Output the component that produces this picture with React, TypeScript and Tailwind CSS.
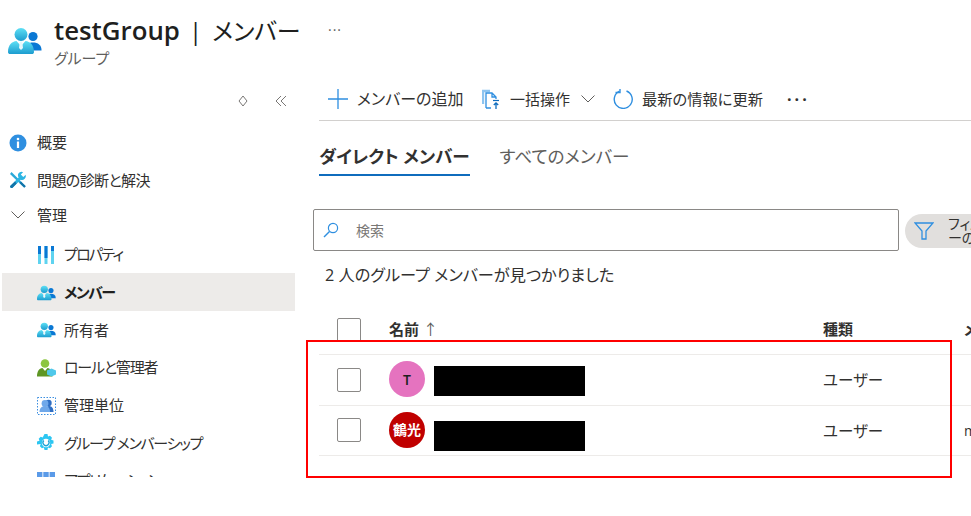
import React from 'react';

const FONT = "font-['Open_Sans','Noto_Sans_CJK_JP',sans-serif] [font-feature-settings:'palt']";

// two-person group icon, used at a few sizes
const GroupIcon = ({ className }: { className: string }) => (
  <svg viewBox="0 0 34 28" className={className}>
    <defs>
      <linearGradient id="grp" x1="0" y1="0" x2="0" y2="1">
        <stop offset="0" stopColor="#5ee0f5" />
        <stop offset="1" stopColor="#1c9ccf" />
      </linearGradient>
    </defs>
    <circle cx="25" cy="9.5" r="4.6" fill="#0a78d4" />
    <path d="M17 23c0-5 3-7.5 8-7.5s8.500 2.500 8.500 7.500v0.500H17z" fill="#0a78d4" />
    <circle cx="13" cy="7.500" r="6.500" fill="url(#grp)" />
    <path d="M0 25c0-7 4-10.500 8.500-11L13 19l4.500-5c4.500 0.500 8.500 4 8.500 11 0 1.500-1 2-2 2H2c-1 0-2-0.500-2-2z" fill="url(#grp)" />
    <path d="M11.800 14.500h2.400L15 21l-2 2-2-2z" fill="#e8f8fc" />
  </svg>
);

const InfoIcon = () => (
  <svg viewBox="0 0 18 18" className="w-[18px] h-[18px]">
    <circle cx="9" cy="9" r="8.500" fill="#2f8fe0" />
    <circle cx="9" cy="5" r="1.300" fill="#fff" />
    <rect x="7.900" y="7.500" width="2.200" height="6.500" fill="#fff" />
  </svg>
);

// crossed wrench and screwdriver
const ToolsIcon = () => (
  <svg viewBox="0 0 18 18" className="w-[18px] h-[18px]">
    <path d="M2.500 1 12 10.500 16.500 15 15 16.500 1 3z" fill="#2aa8d8" />
    <path d="M12 10.500 16.800 15.300 15.300 16.800 10.500 12z" fill="#1273a8" />
    <path d="M10.800 1.200a4 4 0 0 1 3.300 0L11.800 3.500l2.500 2.500L16.700 3.700a4 4 0 0 1-5 5L3.800 16.500c-.8.800-1.500.8-2.200.1s-.7-1.500.1-2.200L9.600 6.500a4 4 0 0 1 1.200-5.300z" fill="#2cb5e3" />
    <path d="M3.800 16.500c-.8.800-1.500.8-2.200.1s-.7-1.500.1-2.200L6 10.500 7.700 12.500z" fill="#1273a8" />
  </svg>
);

const PropsIcon = () => (
  <svg viewBox="0 0 18 18" className="w-[18px] h-[18px]">
    <rect x="1" y="0" width="3" height="18" fill="#5ed3f0" />
    <rect x="7.500" y="0" width="3" height="18" fill="#5ed3f0" />
    <rect x="14" y="0" width="3" height="18" fill="#5ed3f0" />
    <rect x="1" y="0" width="3" height="8" fill="#0a78d4" />
    <rect x="7.500" y="0" width="3" height="12" fill="#0a78d4" />
    <rect x="14" y="0" width="3" height="5" fill="#0a78d4" />
  </svg>
);

const RoleIcon = () => (
  <svg viewBox="0 0 20 18" className="w-[20px] h-[18px]">
    <circle cx="8" cy="4.500" r="4.300" fill="#8cc63f" />
    <path d="M0 17.500c0-5 2-8 5.500-8.500L8 12l2.500-3c3 .5 5 3 5 8.500z" fill="#5e9624" />
    <path d="M14.500 9.500l4.500 2v4l-4.500 2-4.500-2v-4z" fill="#50c8ea" />
  </svg>
);

const AdminUnitIcon = () => (
  <svg viewBox="0 0 19 18" className="w-[19px] h-[18px]">
    <rect x=".500" y=".500" width="18" height="17" fill="#fff" stroke="#3b8ee0" strokeDasharray="1.500 1.500" />
    <circle cx="11.500" cy="6" r="3.200" fill="#2f6fc4" />
    <path d="M8 15c0-4 1.500-6 4-6s4.500 2 4.500 6z" fill="#2f6fc4" />
    <circle cx="8" cy="6.500" r="3.400" fill="#6fa8ea" />
    <path d="M2.500 15c0-4 2.500-6 5.500-6s5 2 5 6z" fill="#6fa8ea" />
  </svg>
);

const GearIcon = () => (
  <svg viewBox="0 0 18 18" className="w-[18px] h-[18px]">
    <path
      d="M7.500 0h3l.5 2.500 2-.8 2 2-.9 2 2.400.8v3l-2.400.6.900 2.200-2 2-2.100-.9-.4 2.600h-3l-.6-2.600-2 .9-2-2 .8-2.200L0 10.500v-3l2.500-.7-.8-2.100 2-2 2 .8z"
      fill="#2cc6f2"
    />
    <circle cx="9" cy="9" r="4.200" fill="#fff" />
    <path d="M6.800 6.500a3 3 0 1 0 4.400 0" fill="none" stroke="#1ea5d8" strokeWidth="1.300" />
  </svg>
);

const AppsIcon = () => (
  <svg viewBox="0 0 18 18" className="w-[18px] h-[18px]">
    {[0, 6.300, 12.600].map((x) => (
      <rect key={x} x={x} y="0" width="5.400" height="5.400" fill="#5a9ae8" />
    ))}
    {[0, 6.300, 12.600].map((x) => (
      <rect key={x} x={x} y="6.300" width="5.400" height="5.400" fill="#5a9ae8" />
    ))}
  </svg>
);

const NavItem = ({
  icon,
  label,
  active,
  sub,
  tracking = '',
}: {
  icon: React.ReactNode;
  label: string;
  active?: boolean;
  sub?: boolean;
  tracking?: string;
}) => (
  <div
    className={`flex items-center shrink-0 ${sub ? 'h-[37.700px] pl-[35px] pt-[1px]' : 'h-[37.500px] pl-[7px]'} ${active ? 'bg-[#edebe9] font-bold text-[#201f1e]' : 'text-[#323130]'}`}
  >
    <span className={`${sub ? 'w-[27px]' : 'w-[28px]'} flex items-center shrink-0`}>{icon}</span>
    <span className={`text-[15px] leading-none whitespace-nowrap ${tracking}`}>{label}</span>
  </div>
);

const Checkbox = () => (
  <div className="w-[24px] h-[24px] rounded-[2px] border border-[#8a8886] bg-white shrink-0" />
);

const MemberRow = ({
  avatar,
  avatarClass,
  extra,
  barOffset,
  textOffset,
}: {
  avatar: string;
  avatarClass: string;
  extra?: string;
  barOffset: string;
  textOffset: string;
}) => (
  <div className="flex items-center border-b border-[#edebe9] h-[50.500px] pl-[18px]">
    <Checkbox />
    <div className={`ml-[28px] w-[36px] h-[36px] -mt-[1px] shrink-0 rounded-full flex items-center justify-center text-[14px] font-semibold ${avatarClass}`}>
      {avatar}
    </div>
    <div className={`ml-[9px] w-[151px] h-[30px] shrink-0 bg-black ${barOffset}`} />
    <div className={`ml-[238px] w-[141px] shrink-0 text-[15.500px] text-[#323130] whitespace-nowrap ${textOffset}`}>ユーザー</div>
    {extra && <div className="text-[14px] text-[#323130]">{extra}</div>}
  </div>
);

export default function App() {
  return (
    <div className={`relative w-[971px] h-[516px] overflow-hidden bg-white ${FONT}`}>
      {/* Blade header */}
      <header className="flex h-[80px] pl-[8px] pt-[14px]">
        <div className="pt-[13px] w-[46px] shrink-0">
          <GroupIcon className="w-[34px] h-[28px]" />
        </div>
        <div className="w-[274px] shrink-0">
          <div className="flex items-center h-[34px] leading-none text-[#201f1e] whitespace-nowrap">
            <span className="text-[25.800px] font-semibold">testGroup</span>
            <span className="ml-[9px] text-[24px]">|</span>
            <span className="ml-[10px] text-[24px]">メンバー</span>
          </div>
          <div className="text-[15px] leading-[18px] text-[#605e5c] mt-[1px]">グループ</div>
        </div>
        <div className="mt-[5px] text-[14px] text-[#605e5c] tracking-[1px]">···</div>
      </header>

      <div className="flex h-[397px] overflow-hidden">
        {/* Left nav */}
        <nav className="w-[296px] shrink-0 pl-[2px] pr-[1px] flex flex-col overflow-hidden">
          <div className="flex items-center justify-end h-[44px] shrink-0 pr-[8px] pb-[2px] gap-[27px] text-[#797775]">
            <svg viewBox="0 0 10 12" className="w-[10px] h-[12px]">
              <path d="M5 1 9 6 5 11 1 6z" fill="none" stroke="currentColor" />
            </svg>
            <svg viewBox="0 0 12 12" className="w-[12px] h-[12px]">
              <path d="M6 1 1 6l5 5M11 1 6 6l5 5" fill="none" stroke="currentColor" />
            </svg>
          </div>
          <NavItem icon={<InfoIcon />} label="概要" />
          <NavItem icon={<ToolsIcon />} label="問題の診断と解決" tracking="tracking-[-0.600px]" />
          <div className="flex items-center h-[32px] shrink-0 pl-[9px] text-[#323130] mb-[4.500px]">
            <svg viewBox="0 0 14 8" className="w-[14px] h-[8px] mr-[12px]">
              <path d="M.500 .500 7 7 13.500 .500" fill="none" stroke="#605e5c" />
            </svg>
            <span className="text-[15px] leading-none">管理</span>
          </div>
          <NavItem sub icon={<PropsIcon />} label="プロパティ" tracking="tracking-[-1.700px]" />
          <NavItem sub active icon={<GroupIcon className="w-[19px] h-[16px]" />} label="メンバー" tracking="tracking-[-1.500px]" />
          <NavItem sub icon={<GroupIcon className="w-[19px] h-[16px]" />} label="所有者" />
          <NavItem sub icon={<RoleIcon />} label="ロールと管理者" tracking="tracking-[-1.200px]" />
          <NavItem sub icon={<AdminUnitIcon />} label="管理単位" />
          <NavItem sub icon={<GearIcon />} label="グループ メンバーシップ" tracking="tracking-[-1.300px]" />
          <NavItem sub icon={<AppsIcon />} label="アプリケーション" tracking="tracking-[-1.400px]" />
        </nav>

        {/* Main content */}
        <main className="flex-1 min-w-0 pl-[17px] flex flex-col">
          <div className="ml-[6px] flex items-center h-[41px] pb-[2px] border-b border-[#d2d0ce] text-[15px] text-[#323130] whitespace-nowrap">
            <svg viewBox="0 0 20 20" className="w-[20px] h-[20px] ml-[9px] shrink-0">
              <path d="M10 0v20M0 10h20" stroke="#2f8fe0" strokeWidth="1.300" />
            </svg>
            <span className="ml-[9px] w-[106px] shrink-0 text-[16px]">メンバーの追加</span>
            <svg viewBox="0 0 18 20" className="w-[18px] h-[20px] ml-[19px] shrink-0">
              <path d="M1 15V2h7" fill="none" stroke="#8dc4f0" strokeWidth="2.400" />
              <path d="M4 19V4h6l4 4v2M10 4v4h4M4 19h5" fill="none" stroke="#2f8fe0" strokeWidth="1.300" />
              <path d="M11 11.500h6" stroke="#0f6cbd" strokeWidth="1.200" />
              <path d="M14 20v-6M11.800 16 14 13.800 16.200 16" fill="none" stroke="#0f6cbd" strokeWidth="1.300" />
            </svg>
            <span className="ml-[10px] w-[61px] shrink-0">一括操作</span>
            <svg viewBox="0 0 14 8" className="w-[14px] h-[8px] ml-[10px] shrink-0">
              <path d="M.500 .500 7 7 13.500 .500" fill="none" stroke="#605e5c" />
            </svg>
            <svg viewBox="0 0 20 20" className="w-[20px] h-[20px] ml-[18px] shrink-0">
              <path d="M6.500 2.200a9 9 0 1 0 7-.200" fill="none" stroke="#2f8fe0" strokeWidth="1.400" />
              <path d="M6 0v4h-4.500" fill="none" stroke="#2f8fe0" strokeWidth="1.400" transform="translate(1 -.5)" />
            </svg>
            <span className="ml-[9px] w-[122px] shrink-0 text-[15.250px]">最新の情報に更新</span>
            <span className="ml-[23px] text-[16px] font-bold tracking-[3px] leading-none">···</span>
          </div>

          {/* Tabs */}
          <div className="ml-[6px] flex h-[55px] gap-[30px] text-[17.600px] whitespace-nowrap">
            <div className="h-full flex items-end pb-[5px] border-b-2 border-[#0f6cbd] font-bold text-[#323130]">
              ダイレクト メンバー
            </div>
            <div className="h-full flex items-end pb-[7px] text-[#605e5c]">すべてのメンバー</div>
          </div>

          {/* Search and filter */}
          <div className="flex items-center mt-[33px] h-[42px]">
            <div className="w-[586px] h-[42px] shrink-0 rounded-[2px] border border-[#8a8886] flex items-center pl-[9px]">
              <svg viewBox="0 0 16 16" className="w-[16px] h-[16px]">
                <circle cx="10" cy="6" r="4.600" fill="none" stroke="#2f8fe0" strokeWidth="1.200" />
                <path d="M6.500 9.500 1 15" stroke="#2f8fe0" strokeWidth="1.400" />
              </svg>
              <span className="ml-[17px] text-[14px] text-[#797775]">検索</span>
            </div>
            <div className="ml-[6px] mt-[2px] h-[34px] w-[120px] shrink-0 rounded-l-[17px] bg-[#e1dfdd] flex items-center pl-[9px]">
              <svg viewBox="0 0 20 18" className="w-[20px] h-[18px] shrink-0">
                <path d="M1 1h18l-7 8v8H8V9z" fill="none" stroke="#2f8fe0" strokeWidth="1.300" />
              </svg>
              <div className="ml-[14px] text-[14px] leading-[14px] text-[#323130] whitespace-nowrap">
                <div>フィルタ</div>
                <div>ーの</div>
              </div>
            </div>
          </div>

          <div className="ml-[12px] mt-[14px] text-[16.200px] leading-[20px] text-[#323130] whitespace-nowrap">
            2 人のグループ メンバーが見つかりました
          </div>

          {/* Member table */}
          <div className="ml-[6px] mt-[33px]">
            <div className="flex border-b border-[#edebe9] h-[37px] pl-[18px] text-[15px] font-bold text-[#323130] whitespace-nowrap">
              <Checkbox />
              <div className="ml-[28px] w-[434px] shrink-0">
                名前 <span className="font-normal text-[#605e5c]">↑</span>
              </div>
              <div className="w-[141px] shrink-0">種類</div>
              <div>メール</div>
            </div>
            <MemberRow avatar="T" avatarClass="bg-[#e573bf] text-[#201f1e]" barOffset="mt-[3px]" textOffset="mt-[2px]" />
            <MemberRow avatar="鶴光" avatarClass="bg-[#c00000] text-white" extra="m" barOffset="mt-[12px]" textOffset="mt-[2px]" />
          </div>
        </main>
      </div>

      {/* Red annotation drawn over the screenshot */}
      <div className="absolute left-[306px] top-[340px] w-[646px] h-[138px] border-[2px] border-[#ff0000]" />
    </div>
  );
}
